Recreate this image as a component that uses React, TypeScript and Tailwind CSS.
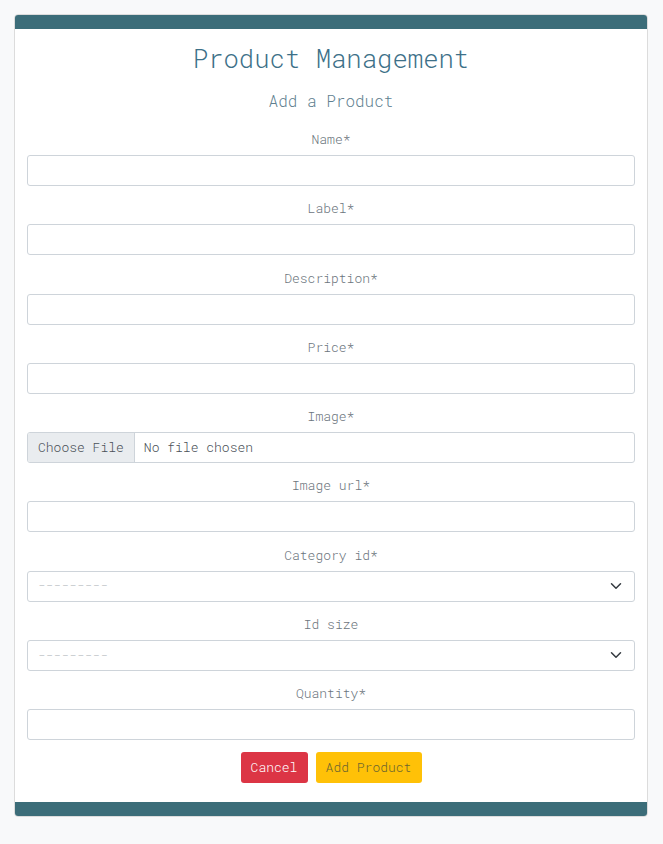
import React from 'react'

const mono = 'font-["Roboto_Mono","DejaVu_Sans_Mono",monospace] font-light'

type FieldProps = { label: string; children: React.ReactNode }

function Field({ label, children }: FieldProps) {
  return (
    <div className="mb-[12.25px] flex flex-col">
      <label className="mb-[6px] text-center text-[13px] leading-[20px] text-[#6c757d]">
        {label}
      </label>
      {children}
    </div>
  )
}

function TextInput() {
  return (
    <input
      type="text"
      className="h-[31px] w-full rounded-[3px] border border-[#ced4da] bg-white px-2 text-[13px] outline-none"
    />
  )
}

function FileInput() {
  return (
    <div className="flex h-[31px] w-full overflow-hidden rounded-[3px] border border-[#ced4da] bg-white text-[13px] text-[#495057]">
      <div className="flex items-center border-r border-[#ced4da] bg-[#e9ecef] px-[10px]">
        Choose File
      </div>
      <div className="flex items-center px-[9px]">No file chosen</div>
    </div>
  )
}

function SelectInput() {
  return (
    <div className="flex h-[31px] w-full items-center justify-between rounded-[3px] border border-[#ced4da] bg-white pl-[10px] pr-[12px] text-[13px]">
      <span className="text-[#b9bec4]">---------</span>
      <svg width="12" height="12" viewBox="0 0 16 16" fill="none">
        <path
          d="M2 5l6 6 6-6"
          stroke="#343a40"
          strokeWidth="2"
          strokeLinecap="round"
          strokeLinejoin="round"
        />
      </svg>
    </div>
  )
}

export default function App() {
  return (
    <div className={`min-h-[844px] bg-[#f8f9fa] pt-[14px] ${mono}`}>
      <div className="ml-[14px] w-[634px] overflow-hidden rounded-[4px] border border-[#dcdcdc] bg-white">
        <div className="h-[14px] bg-[#3c6d79]" />
        <div className="px-[12px] pt-[14px]">
          <h3 className="text-center text-[25.6px] leading-[30px] text-[#3d7088]">
            Product Management
          </h3>
          <h5 className="mt-[18px] mb-[18px] text-center text-[16px] leading-[20px] text-[#5f7f90]">
            Add a Product
          </h5>
          <form>
            <Field label="Name*">
              <TextInput />
            </Field>
            <Field label="Label*">
              <TextInput />
            </Field>
            <Field label="Description*">
              <TextInput />
            </Field>
            <Field label="Price*">
              <TextInput />
            </Field>
            <Field label="Image*">
              <FileInput />
            </Field>
            <Field label="Image url*">
              <TextInput />
            </Field>
            <Field label="Category id*">
              <SelectInput />
            </Field>
            <Field label="Id size">
              <SelectInput />
            </Field>
            <Field label="Quantity*">
              <TextInput />
            </Field>
            <div className="mt-[1px] flex justify-center gap-[8px] pb-[19px]">
              <button
                type="button"
                className="h-[31px] w-[67px] rounded-[3px] bg-[#dc3545] text-[13px] text-white"
              >
                Cancel
              </button>
              <button
                type="button"
                className="h-[31px] w-[106px] rounded-[3px] bg-[#ffc107] text-[13px] text-[#6b6530]"
              >
                Add Product
              </button>
            </div>
          </form>
        </div>
        <div className="h-[14px] bg-[#3c6d79]" />
      </div>
    </div>
  )
}
